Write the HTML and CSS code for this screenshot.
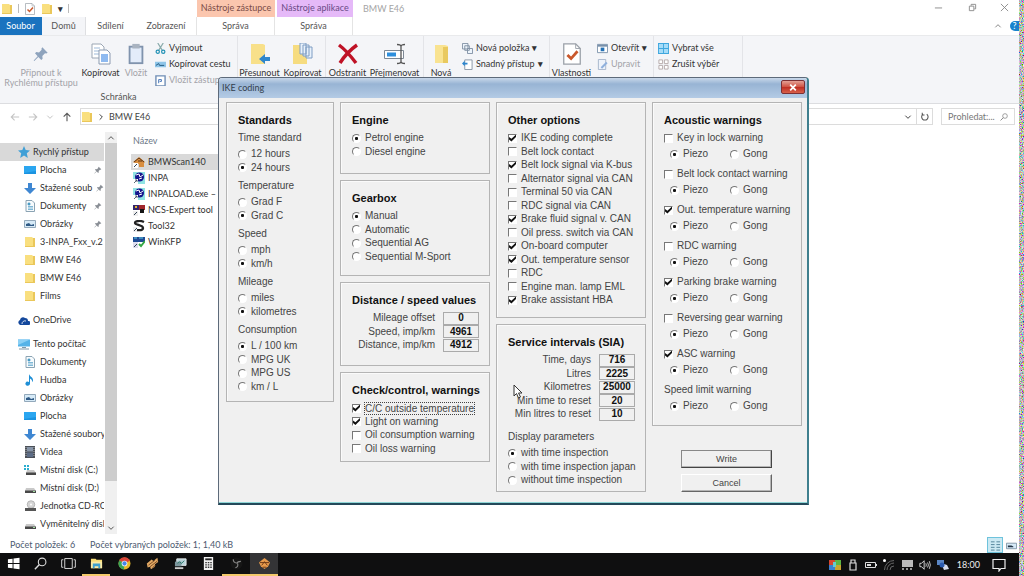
FILE: index.html
```html
<!DOCTYPE html>
<html lang="cs">
<head>
<meta charset="utf-8">
<title>BMW E46</title>
<link rel="stylesheet" href="styles.css">
</head>
<body>

<svg class="sprite" aria-hidden="true">
  <symbol id="folder" viewBox="0 0 12 12"><path d="M1 1h7l1 1h2v9H1z" fill="#f9df7f"/><path d="M9 2h2v9H9zM1 10h10v1H1z" fill="#eac75a"/></symbol>
  <symbol id="star" viewBox="0 0 12 12"><path d="M6 0l1.700 4L12 4.400 8.800 7.300 9.800 12 6 9.500 2.200 12l1-4.700L0 4.400 4.300 4z" fill="#3f9fd6"/></symbol>
  <symbol id="desk" viewBox="0 0 12 12"><path d="M0 2h12v8H0z" fill="#1b93e0"/><path d="M0 2h12v5L0 9z" fill="#2ba6f0"/></symbol>
  <symbol id="down" viewBox="0 0 12 12"><path d="M4 1h4v5h4l-6 6-6-6h4z" fill="#3f87d2"/></symbol>
  <symbol id="doc" viewBox="0 0 12 12"><path d="M2 .5h6l2.500 2.500v8.500H2z" fill="#f7fbfd" stroke="#8ba3b3"/><path d="M4 3h2v2H4zM4 6.500h5M4 8h5M4 9.500h5" stroke="#4b9bc4" fill="#4b9bc4" stroke-width=".7"/></symbol>
  <symbol id="pic" viewBox="0 0 12 12"><path d="M.5 2.500h11v7H.5z" fill="#d6eaf7" stroke="#93a9bb"/><path d="M2 8V6l3-1 2 2 3-1v2z" fill="#2f5a86"/></symbol>
  <symbol id="cloud" viewBox="0 0 12 12"><path d="M1 10a2.500 2.500 0 0 1 1-4 3 3 0 0 1 5-2 3 3 0 0 1 3 3 2 2 0 0 1 1 4H2z" fill="#14489c"/><path d="M4 10a3 3 0 0 1 4-3" stroke="#fff" fill="none" stroke-width=".8"/></symbol>
  <symbol id="pc" viewBox="0 0 12 12"><path d="M0 1.500h12v7H0z" fill="#55b3e8"/><path d="M0 1.500h12L0 7z" fill="#8bd0f5"/><path d="M4 9h4v1H4zM1 10.500h10v1H1z" fill="#7e98a8"/></symbol>
  <symbol id="note" viewBox="0 0 12 12"><path d="M5 0c1 3 4 3 4 6 0 1-.5 2-1 2 .5-2-1-3-2-3.500V9.500A2.300 2 0 1 1 5 8z" fill="#1f8fd6"/></symbol>
  <symbol id="film" viewBox="0 0 12 12"><path d="M1 0h10v12H1z" fill="#4a4f57"/><path d="M3 1h6v4.500H3z" fill="#8795a8"/><path d="M3 6.500h6V11H3z" fill="#5c6c86"/><path d="M2 1v10M10 1v10" stroke="#ccc" stroke-dasharray="1 1" stroke-width=".8"/></symbol>
  <symbol id="disk" viewBox="0 0 12 12"><path d="M2 6h8l2 3H1z" fill="#c9c9c9"/><path d="M1 8.500h11V11H1z" fill="#484848"/><path d="M9 9.500h2" stroke="#9fdc9f"/></symbol>
  <symbol id="diskc" viewBox="0 0 12 12"><path d="M0 1h2v2H0zM3 1h2v2H3zM0 4h2v2H0zM3 4h2v2H3z" fill="#2aaed0"/><path d="M3 6h7l2 3H2z" fill="#c9c9c9"/><path d="M2 8.500h10V11H2z" fill="#484848"/></symbol>
  <symbol id="cd" viewBox="0 0 12 12"><circle cx="7" cy="4.500" r="3.800" fill="#d5d5d5" stroke="#999" stroke-width=".6"/><circle cx="7" cy="4.500" r="1" fill="#fff"/><path d="M1 8h11v3H1z" fill="#555"/></symbol>
  <symbol id="pin" viewBox="0 0 12 12"><path d="M7 1l4 4-1 .7-1-.2-2 2 .2 2-1 1L4 8.200 1 11.300l-.5-.5L3.500 7.700 1.500 5.500l1-1 2 .3 2-2L6.300 2z"/></symbol>
  <symbol id="chev" viewBox="0 0 12 12"><path d="M2 4l4 4 4-4" fill="none" stroke="currentColor" stroke-width="1.500"/></symbol>
  <symbol id="arrow" viewBox="0 0 12 12"><path d="M6 11V1.500M2 5.500l4-4 4 4" fill="none" stroke="currentColor" stroke-width="1.300"/></symbol>
  <symbol id="lens" viewBox="0 0 12 12"><circle cx="7.500" cy="4.500" r="3.500" fill="none" stroke="currentColor"/><path d="M5 7L.8 11.200" stroke="currentColor" stroke-width="1.300"/></symbol>
  <symbol id="check" viewBox="0 0 20 24"><path d="M1 1h13l5 5v17H1z" fill="#fff" stroke="#9aa0a8" stroke-width="1.400"/><path d="M14 1v5h5" fill="none" stroke="#9aa0a8"/><path d="M5 13l4 4 7-8" fill="none" stroke="#c9582c" stroke-width="3"/></symbol>
  <symbol id="sheets" viewBox="0 0 20 22"><path d="M1 1h9l3 3v11H1z" fill="#fff" stroke="#9ba6b4"/><path d="M3 5h6M3 8h8M3 11h8" stroke="#9db9d8"/><path d="M8 7h8l3 3v11H8z" fill="#fff" stroke="#8b9ab0"/><path d="M10 11h7v8h-7z" fill="#8fbaf0"/></symbol>
  <symbol id="inpa" viewBox="0 0 12 12"><path d="M0 0h12v12H0z" fill="#8fe3e3"/><circle cx="6.500" cy="5" r="4.500" fill="#15158c"/><path d="M3 3l3-1 1 3 3-2M6 7l3-1" stroke="#fff" fill="none"/><path d="M0 7h5v5H0z" fill="#fff"/><path d="M1 11l3-3M2 8h2v2" stroke="#345" fill="none" stroke-width=".8"/></symbol>
  <symbol id="chip" viewBox="0 0 16 16"><path d="M1 8l6-5 2 2 5-4 1 5-4 3v3l-5 3-1-3-3 1z" fill="#e0a864"/><path d="M3 10l8-6M5 12l9-7M8 13l4-3" stroke="#6d3d1b"/></symbol>
</svg>

<div class="screen">

  <header class="titlebar">
    <div class="quick">
      <svg class="i12"><use href="#folder"/></svg><i></i>
      <svg class="i12"><use href="#check"/></svg>
      <svg class="i12"><use href="#folder"/></svg>
      <b>&#9662;</b><i></i>
    </div>
    <span class="context context--link">Nástroje zástupce</span>
    <span class="context context--app">Nástroje aplikace</span>
    <h1 class="caption">BMW E46</h1>
    <div class="winbtns">
      <button aria-label="Minimalizovat"><svg viewBox="0 0 10 10"><path d="M1 5.500h8"/></svg></button>
      <button aria-label="Obnovit"><svg viewBox="0 0 10 10"><path d="M1.500 3.500h5v5h-5zM3.500 3V1.500h5v5H7"/></svg></button>
      <button aria-label="Zavřít"><svg viewBox="0 0 10 10"><path d="M1 1l8 8M9 1L1 9"/></svg></button>
    </div>
  </header>

  <nav class="tabs">
    <button class="tab tab--file">Soubor</button>
    <button class="tab tab--on">Domů</button>
    <button class="tab tab--share">Sdílení</button>
    <button class="tab tab--view">Zobrazení</button>
    <button class="tab tab--tool">Správa</button>
    <button class="tab tab--tool">Správa</button>
    <span class="tabs__end">
      <svg class="i8 flip"><use href="#chev"/></svg>
      <button class="help" aria-label="Nápověda">?</button>
    </span>
  </nav>

  <section class="ribbon">
    <div class="group group--clip">
      <div class="group__items">
        <button class="big big--pin off"><svg fill="#8ea3bd"><use href="#pin"/></svg>Připnout k<br>Rychlému přístupu</button>
        <button class="big big--copy"><svg><use href="#sheets"/></svg>Kopírovat</button>
        <button class="big big--slim off"><svg viewBox="0 0 18 24"><path d="M1 3h16v20H1z" fill="#8093ad"/><path d="M3 5h12v16H3z" fill="#e3ecfa"/><path d="M5 1h8v5H5z" fill="#a9b3c0"/></svg>Vložit</button>
        <div class="smalls">
          <button class="small"><svg viewBox="0 0 12 12"><path d="M3 0l5 8M9 0L4 8" stroke="#8aa" stroke-width="1.300"/><circle cx="3" cy="9.500" r="1.800" fill="none" stroke="#2191b5" stroke-width="1.300"/><circle cx="9" cy="9.500" r="1.800" fill="none" stroke="#2191b5" stroke-width="1.300"/></svg>Vyjmout</button>
          <button class="small"><svg viewBox="0 0 12 12"><path d="M0 3h12v6H0z" fill="#8fc5e8"/><path d="M1 7l3-2 1 2h5" stroke="#20587e" fill="none"/></svg>Kopírovat cestu</button>
          <button class="small off"><svg viewBox="0 0 12 12"><path d="M1 1h10v11H1z" fill="#fff" stroke="#6f8db5" stroke-width="1.500"/><path d="M4 9V5h3v2H5" fill="none" stroke="#3d6fb5"/></svg>Vložit zástupce</button>
        </div>
      </div>
      <p class="group__name">Schránka</p>
    </div>
    <div class="group group--move">
      <div class="group__items">
        <button class="big"><svg viewBox="0 0 20 22"><path d="M1 1h12l2 1v19H1z" fill="#f8e08a"/><path d="M9 16l6-5v3h5v4h-5v3z" fill="#2e86cd"/></svg>Přesunout</button>
        <button class="big"><svg viewBox="0 0 20 22"><path d="M0 2h12l2 1v18H0z" fill="#f6dc80"/><path d="M7 0h6v11H7zM10 2h6v11h-6zM13 4h6v11h-6z" fill="#e8f1fb" stroke="#7f9dc3"/></svg>Kopírovat</button>
      </div>
    </div>
    <div class="group group--del">
      <div class="group__items">
        <button class="big"><svg viewBox="0 0 22 22"><path d="M2 2q8 6 17 18M20 2Q10 9 3 20" fill="none" stroke="#bf1226" stroke-width="3.400"/></svg>Odstranit</button>
        <button class="big big--wide"><svg viewBox="0 0 22 20"><path d="M.5 6.500h19v8H.5z" fill="#fff" stroke="#7d8894"/><path d="M3 8.500h9v4H3z" fill="#2e8fdd"/><path d="M13 .5q4 0 4 2 0-2 4-2M17 2v16M13 19.500q4 0 4-2 0 2 4 2" fill="none" stroke="#555"  stroke-width="1.300"/></svg>Přejmenovat</button>
      </div>
    </div>
    <div class="group group--new">
      <div class="group__items">
        <button class="big big--slim"><svg viewBox="0 0 16 22"><path d="M2 2h10l3 1v17H2z" fill="#f9e391"/><path d="M10 4h5v16h-5z" fill="#e9c95f"/></svg>Nová</button>
        <div class="smalls">
          <button class="small"><svg viewBox="0 0 12 12"><path d="M.5.5h6v6h-6zM3 3h5v5H3zM6 6h5.500v5.500H6z" fill="#eef5fc" stroke="#7f8fa3"/></svg>Nová položka <b>&#9662;</b></button>
          <button class="small"><svg viewBox="0 0 12 12"><path d="M3 1h8v10.500H3z" fill="#fff" stroke="#8794a3"/><path d="M0 5l3-3v2h3v2H3v2z" fill="#2e86cd"/></svg>Snadný přístup <b>&#9662;</b></button>
        </div>
      </div>
    </div>
    <div class="group group--open">
      <div class="group__items">
        <button class="big"><svg><use href="#check"/></svg>Vlastnosti</button>
        <div class="smalls">
          <button class="small"><svg viewBox="0 0 12 12"><path d="M.5 1.500h11v9H.5z" fill="#fff" stroke="#7990aa"/><path d="M1 2h10v2H1z" fill="#7990aa"/><path d="M4 5h4v4H4z" fill="#2471b5"/></svg>Otevřít <b>&#9662;</b></button>
          <button class="small off"><svg viewBox="0 0 12 12"><path d="M1.500.5h8v11h-8z" fill="#eef3fb" stroke="#a4b3c9"/><path d="M4 9l6-6 1.500 1.500-6 6z" fill="#8fb0dd"/></svg>Upravit</button>
        </div>
      </div>
    </div>
    <div class="group group--pick">
      <div class="group__items">
        <div class="smalls">
          <button class="small"><svg viewBox="0 0 12 12"><path d="M0 0h12v12H0z" fill="#3fa7de"/><path d="M1 1h4.500v4.500H1zM6.500 1H11v4.500H6.500zM1 6.500h4.500V11H1zM6.500 6.500H11V11H6.500z" fill="#a6dcf8"/></svg>Vybrat vše</button>
          <button class="small"><svg viewBox="0 0 12 12"><path d="M1 1h4v4H1zM7 1h4v4H7zM1 7h4v4H1zM7 7h4v4H7z" fill="#fff" stroke="#b3a9a9"/></svg>Zrušit výběr</button>
        </div>
      </div>
    </div>
  </section>

  <div class="address">
    <svg class="i10 left pale"><use href="#arrow"/></svg>
    <svg class="i10 right pale"><use href="#arrow"/></svg>
    <svg class="i8 pale"><use href="#chev"/></svg>
    <svg class="i10"><use href="#arrow"/></svg>
    <div class="path">
      <svg class="i12"><use href="#folder"/></svg>
      <svg class="i8 left--chev"><use href="#chev"/></svg>
      <span>BMW E46</span>
      <svg class="i8 path__drop"><use href="#chev"/></svg>
      <button class="reload" aria-label="Aktualizovat"><svg viewBox="0 0 12 12"><path d="M9 3a4.300 4.300 0 1 1-5 0M3 1v3h3" fill="none" stroke="#555" stroke-width="1.400"/></svg></button>
    </div>
    <div class="search">
      <input type="text" value="Prohledat:..." aria-label="Prohledat">
      <svg class="i8"><use href="#lens"/></svg>
    </div>
  </div>

  <main class="content">
    <aside class="tree">
      <ul class="tree__list">
        <li class="tree__top tree__top--on"><svg><use href="#star"/></svg><span>Rychlý přístup</span></li>
        <li><svg><use href="#desk"/></svg><span>Plocha</span><svg class="pinned"><use href="#pin"/></svg></li>
        <li><svg><use href="#down"/></svg><span>Stažené soub</span><svg class="pinned"><use href="#pin"/></svg></li>
        <li><svg><use href="#doc"/></svg><span>Dokumenty</span><svg class="pinned"><use href="#pin"/></svg></li>
        <li><svg><use href="#pic"/></svg><span>Obrázky</span><svg class="pinned"><use href="#pin"/></svg></li>
        <li><svg><use href="#folder"/></svg><span>3-INPA_Fxx_v.2</span></li>
        <li><svg><use href="#folder"/></svg><span>BMW E46</span></li>
        <li><svg><use href="#folder"/></svg><span>BMW E46</span></li>
        <li><svg><use href="#folder"/></svg><span>Films</span></li>
        <li class="tree__top"><svg><use href="#cloud"/></svg><span>OneDrive</span></li>
        <li class="tree__top"><svg><use href="#pc"/></svg><span>Tento počítač</span></li>
        <li><svg><use href="#doc"/></svg><span>Dokumenty</span></li>
        <li><svg><use href="#note"/></svg><span>Hudba</span></li>
        <li><svg><use href="#pic"/></svg><span>Obrázky</span></li>
        <li><svg><use href="#desk"/></svg><span>Plocha</span></li>
        <li><svg><use href="#down"/></svg><span>Stažené soubory</span></li>
        <li><svg><use href="#film"/></svg><span>Videa</span></li>
        <li><svg><use href="#diskc"/></svg><span>Místní disk (C:)</span></li>
        <li><svg><use href="#disk"/></svg><span>Místní disk (D:)</span></li>
        <li><svg><use href="#cd"/></svg><span>Jednotka CD-RO</span></li>
        <li><svg><use href="#disk"/></svg><span>Vyměnitelný disk</span></li>
      </ul>
      <div class="scroll">
        <svg class="i8 flip"><use href="#chev"/></svg>
        <div class="scroll__thumb"></div>
        <svg class="i8"><use href="#chev"/></svg>
      </div>
    </aside>
    <section class="files">
      <h2>Název</h2>
      <ul>
        <li class="on"><svg viewBox="0 0 12 12"><path d="M0 6l6-5 6 5-1 1v4H6V8L2 7z" fill="#d98e3f"/><path d="M1 6l5-4 5 4M5 5h4" stroke="#5e3618" fill="none"/><path d="M0 7h5v5H0z" fill="#fff"/><path d="M1 11l3-3" stroke="#345"/></svg>BMWScan140</li>
        <li><svg><use href="#inpa"/></svg>INPA</li>
        <li><svg><use href="#inpa"/></svg>INPALOAD.exe – zástupce</li>
        <li><svg viewBox="0 0 12 12"><path d="M0 1h6v5H0z" fill="#33256b"/><path d="M6 1h6v5H6z" fill="#a1262c"/><path d="M7 5h4v4H7z" fill="#151515"/><path d="M2 2h2v2H2z" fill="#e7b72e"/><path d="M0 7h5v5H0z" fill="#eee"/><path d="M1 11l3-3" stroke="#345"/></svg>NCS-Expert tool</li>
        <li><svg viewBox="0 0 12 12"><path d="M11 2C7 0 2 1 2 3s8 2 8 5-5 2-8 2" fill="none" stroke="#222" stroke-width="2.300"/><path d="M0 7h4v5H0z" fill="#eee"/><path d="M1 11l3-3" stroke="#345"/></svg>Tool32</li>
        <li><svg viewBox="0 0 12 12"><path d="M0 1h12v5H0z" fill="#1f4b94"/><path d="M1 2h3M6 2h4" stroke="#5fd0e8"/><path d="M0 6h5v6H0z" fill="#dde"/><path d="M1 11l3-3" stroke="#345"/><path d="M6 8l2 2 4-5" fill="none" stroke="#35a845" stroke-width="2"/></svg>WinKFP</li>
      </ul>
    </section>
  </main>

  <footer class="status">
    <span>Počet položek: 6</span>
    <span>Počet vybraných položek: 1; 1,40 kB</span>
    <div class="views">
      <button class="on" aria-label="Podrobnosti"><svg viewBox="0 0 12 12"><path d="M1 2h4M7 2h4M1 5h4M7 5h4M1 8h4M7 8h4M1 11h4M7 11h4" stroke="#4d7f96"/></svg></button>
      <button aria-label="Velké ikony"><svg viewBox="0 0 12 12"><path d="M.5 3.500h11v6H.5z" fill="#d6eaf7" stroke="#8196a5"/><path d="M2 8V6h4l2 1v1z" fill="#234"/></svg></button>
    </div>
  </footer>

  <div class="taskbar">
    <button class="start" aria-label="Start"><svg viewBox="0 0 14 14"><path d="M1 2.500l5-.7v4.700H1zM7 1.600L13.500.7v5.800H7zM1 7.500h5v4.700l-5-.7zM7 7.500h6.500v5.800L7 12.400z" fill="#fff"/></svg></button>
    <button aria-label="Hledat"><svg class="light"><use href="#lens"/></svg></button>
    <button aria-label="Zobrazení úkolů"><svg class="wide" viewBox="0 0 16 12"><path d="M4 .7h8v10.600H4zM2.500 2H.7v8h1.800M13.500 2h1.800v8h-1.800" fill="none" stroke="#ddd"/></svg></button>
    <button class="run" aria-label="Průzkumník"><svg viewBox="0 0 14 12"><path d="M1 1h5l1 1h6v9H1z" fill="#f7dc76"/><path d="M1 4h12v7H1z" fill="#fbeaa4"/><path d="M3 11V6h8v5H9V9H5v2z" fill="#3fa0ce"/></svg></button>
    <button aria-label="Chrome"><svg viewBox="0 0 12 12"><circle cx="6" cy="6" r="5.500" fill="#e6b829"/><path d="M6 6L1.200 3.200A5.500 5.500 0 0 1 11 3.500z" fill="#d9443a"/><path d="M6 6L1.200 3.200A5.500 5.500 0 0 0 5.500 11.500z" fill="#3aa356"/><circle cx="6" cy="6" r="2.600" fill="#fff"/><circle cx="6" cy="6" r="2" fill="#4586e8"/></svg></button>
    <button aria-label="Diagnostika"><svg><use href="#chip"/></svg></button>
    <button aria-label="Monitor"><svg viewBox="0 0 14 12"><path d="M3 1h10v7H3z" fill="#b9d2d8" stroke="#e7eef0"/><path d="M1 4h7v5H1z" fill="#7b959c"/><path d="M4 6l2-2 2 2 3-3" stroke="#276" fill="none"/><path d="M1 10h9v2H1z" fill="#ccc"/></svg></button>
    <button aria-label="Kalkulačka"><svg viewBox="0 0 12 14"><path d="M1 0h10v14H1z" fill="#f1f1f1"/><path d="M2.500 2.500h7" stroke="#222" stroke-width="2"/><path d="M2.500 6h7M2.500 8.500h7M2.500 11h7" stroke="#333" stroke-width="1.500" stroke-dasharray="1.700 1"/></svg></button>
    <button class="run" aria-label="OBS"><svg viewBox="0 0 12 12"><circle cx="6" cy="6" r="5.500" fill="#161616"/><path d="M3 2q0 3 3 3.500M10 4q-3 0-4 2M5 10q3-1 2-4" fill="none" stroke="#888"/></svg></button>
    <button class="run run--on" aria-label="BMWScan"><svg viewBox="0 0 14 14"><path d="M1 6l6-5 6 5-2 4-4 3-4-3z" fill="#e69a4c"/><path d="M2 6h10M4 9l3-4 3 4M5 11h4" stroke="#6b3715" fill="none"/></svg></button>
    <div class="tray">
      <svg viewBox="0 0 12 12"><path d="M0 1h6v5H0z" fill="#d8452f"/><path d="M6 1h6v5H6z" fill="#5cb644"/><path d="M0 6h6v5H0z" fill="#3a7fd0"/><path d="M6 6h6v5H6z" fill="#c8a52f"/><path d="M4 3h3v5H4z" fill="#6cc"/></svg>
      <svg viewBox="0 0 12 12"><path d="M4 1h4v3H4zM3 4h6v7H3z" fill="none" stroke="#ddd" stroke-width="1.200"/></svg>
      <svg viewBox="0 0 12 12"><path d="M.5 3.500h10v5H.5zM11.500 5v2" fill="none" stroke="#ddd"/><path d="M2 5h4v2H2z" fill="#ddd"/></svg>
      <svg viewBox="0 0 12 12"><path d="M4 11a7 7 0 0 1 7-7M7 11a4 4 0 0 1 4-4M1.500 11A9.500 9.500 0 0 1 11 1.500" fill="none" stroke="#666"/><circle cx="1.500" cy="1.500" r="1.500" fill="#fff"/></svg>
      <svg viewBox="0 0 12 12"><path d="M1 1h11v7H1z" fill="#bbb"/><path d="M1 10h2M5 10h2M9 10h2" stroke="#999" stroke-width="2"/></svg>
      <svg viewBox="0 0 14 12"><path d="M1 4h2l3-3v10L3 8H1z" fill="none" stroke="#eee"/><path d="M8 4q1 2 0 4M10 3q2 3 0 6M12 1.500q2.500 4.500 0 9" fill="none" stroke="#ddd"/></svg>
      <svg viewBox="0 0 12 12"><path d="M0 1h7v5H0z" fill="#5a86c4"/><path d="M4 4l6 2 2 4-5 1z" fill="#d5dcec"/><circle cx="5" cy="6" r="2.500" fill="#2a5bb0"/></svg>
      <time>18:00</time>
      <svg class="tray__msg" viewBox="0 0 14 14"><path d="M1 1.500h12v9H9L7 13v-2.500H1z" fill="none" stroke="#eee" stroke-width="1.200"/></svg>
    </div>
  </div>

  <form class="dialog" onsubmit="return false">
    <div class="dialog__title">
      <h2>IKE coding</h2>
      <button type="button" aria-label="Close"><svg viewBox="0 0 10 8"><path d="M1.500.5L8.500 7.500M8.500.5L1.500 7.500" stroke="#fff" stroke-width="2.200"/></svg></button>
    </div>
    <div class="dialog__body">

      <div class="col col--first">
        <section class="panel panel--standards">
          <h3>Standards</h3>
          <h4>Time standard</h4>
          <div class="rows">
            <label><input type="radio" name="time">12 hours</label>
            <label><input type="radio" name="time" checked>24 hours</label>
          </div>
          <h4>Temperature</h4>
          <div class="rows">
            <label><input type="radio" name="temp">Grad F</label>
            <label><input type="radio" name="temp" checked>Grad C</label>
          </div>
          <h4>Speed</h4>
          <div class="rows">
            <label><input type="radio" name="speed">mph</label>
            <label><input type="radio" name="speed" checked>km/h</label>
          </div>
          <h4>Mileage</h4>
          <div class="rows">
            <label><input type="radio" name="mileage">miles</label>
            <label><input type="radio" name="mileage" checked>kilometres</label>
          </div>
          <h4>Consumption</h4>
          <div class="rows">
            <label><input type="radio" name="cons" checked>L / 100 km</label>
            <label><input type="radio" name="cons">MPG UK</label>
            <label><input type="radio" name="cons">MPG US</label>
            <label><input type="radio" name="cons">km / L</label>
          </div>
        </section>
      </div>

      <div class="col">
        <section class="panel panel--engine">
          <h3>Engine</h3>
          <div class="rows">
            <label><input type="radio" name="engine" checked>Petrol engine</label>
            <label><input type="radio" name="engine">Diesel engine</label>
          </div>
        </section>
        <section class="panel panel--gearbox">
          <h3>Gearbox</h3>
          <div class="rows">
            <label><input type="radio" name="gear" checked>Manual</label>
            <label><input type="radio" name="gear">Automatic</label>
            <label><input type="radio" name="gear">Sequential AG</label>
            <label><input type="radio" name="gear">Sequential M-Sport</label>
          </div>
        </section>
        <section class="panel panel--distance">
          <h3>Distance / speed values</h3>
          <div class="rows rows--fields">
            <label>Mileage offset<input type="text" value="0"></label>
            <label>Speed, imp/km<input type="text" value="4961"></label>
            <label>Distance, imp/km<input type="text" value="4912"></label>
          </div>
        </section>
        <section class="panel panel--check">
          <h3>Check/control, warnings</h3>
          <div class="rows">
            <label><input type="checkbox" checked><span class="focused">C/C outside temperature</span></label>
            <label><input type="checkbox" checked>Light on warning</label>
            <label><input type="checkbox">Oil consumption warning</label>
            <label><input type="checkbox">Oil loss warning</label>
          </div>
        </section>
      </div>

      <div class="col">
        <section class="panel panel--other">
          <h3>Other options</h3>
          <div class="rows">
            <label><input type="checkbox" checked>IKE coding complete</label>
            <label><input type="checkbox">Belt lock contact</label>
            <label><input type="checkbox" checked>Belt lock signal via K-bus</label>
            <label><input type="checkbox">Alternator signal via CAN</label>
            <label><input type="checkbox">Terminal 50 via CAN</label>
            <label><input type="checkbox">RDC signal via CAN</label>
            <label><input type="checkbox" checked>Brake fluid signal v. CAN</label>
            <label><input type="checkbox">Oil press. switch via CAN</label>
            <label><input type="checkbox" checked>On-board computer</label>
            <label><input type="checkbox" checked>Out. temperature sensor</label>
            <label><input type="checkbox">RDC</label>
            <label><input type="checkbox">Engine man. lamp EML</label>
            <label><input type="checkbox" checked>Brake assistant HBA</label>
          </div>
        </section>
        <section class="panel panel--service">
          <h3>Service intervals (SIA)</h3>
          <div class="rows rows--fields">
            <label>Time, days<input type="text" value="716"></label>
            <label>Litres<input type="text" value="2225"></label>
            <label>Kilometres<input type="text" value="25000"></label>
            <label>Min time to reset<input type="text" value="20"></label>
            <label>Min litres to reset<input type="text" value="10"></label>
          </div>
          <h4>Display parameters</h4>
          <div class="rows">
            <label><input type="radio" name="insp" checked>with time inspection</label>
            <label><input type="radio" name="insp">with time inspection japan</label>
            <label><input type="radio" name="insp">without time inspection</label>
          </div>
        </section>
      </div>

      <div class="col">
        <section class="panel panel--acoustic">
          <h3>Acoustic warnings</h3>
          <div class="warn">
            <label><input type="checkbox">Key in lock warning</label>
            <div class="warn__kind"><label><input type="radio" name="w1" checked>Piezo</label><label><input type="radio" name="w1">Gong</label></div>
          </div>
          <div class="warn">
            <label><input type="checkbox">Belt lock contact warning</label>
            <div class="warn__kind"><label><input type="radio" name="w2" checked>Piezo</label><label><input type="radio" name="w2">Gong</label></div>
          </div>
          <div class="warn">
            <label><input type="checkbox" checked>Out. temperature warning</label>
            <div class="warn__kind"><label><input type="radio" name="w3" checked>Piezo</label><label><input type="radio" name="w3">Gong</label></div>
          </div>
          <div class="warn">
            <label><input type="checkbox">RDC warning</label>
            <div class="warn__kind"><label><input type="radio" name="w4" checked>Piezo</label><label><input type="radio" name="w4">Gong</label></div>
          </div>
          <div class="warn">
            <label><input type="checkbox" checked>Parking brake warning</label>
            <div class="warn__kind"><label><input type="radio" name="w5" checked>Piezo</label><label><input type="radio" name="w5">Gong</label></div>
          </div>
          <div class="warn">
            <label><input type="checkbox">Reversing gear warning</label>
            <div class="warn__kind"><label><input type="radio" name="w6" checked>Piezo</label><label><input type="radio" name="w6">Gong</label></div>
          </div>
          <div class="warn">
            <label><input type="checkbox" checked>ASC warning</label>
            <div class="warn__kind"><label><input type="radio" name="w7" checked>Piezo</label><label><input type="radio" name="w7">Gong</label></div>
          </div>
          <div class="warn">
            <p>Speed limit warning</p>
            <div class="warn__kind"><label><input type="radio" name="w8" checked>Piezo</label><label><input type="radio" name="w8">Gong</label></div>
          </div>
        </section>
        <div class="actions">
          <button class="btn btn--default">Write</button>
          <button class="btn" type="button">Cancel</button>
        </div>
      </div>

    </div>
  </form>

  <svg class="pointer" viewBox="0 0 10 15"><path d="M1 1v11l2.500-2.500L5.500 14l2-1-2-4H9z" fill="#fff" stroke="#333"/></svg>
</div>

<svg class="noise" aria-hidden="true">
  <filter id="grain"><feTurbulence type="fractalNoise" baseFrequency=".9" numOctaves="2"/><feComponentTransfer><feFuncR type="linear" slope="2" intercept="-.5"/><feFuncG type="linear" slope="2" intercept="-.5"/><feFuncB type="linear" slope="2" intercept="-.5"/><feFuncA type="linear" slope="0" intercept="1"/></feComponentTransfer></filter>
  <rect width="100%" height="100%" filter="url(#grain)"/>
</svg>

</body>
</html>
```
FILE: styles.css
```css
* {
	box-sizing: border-box;
}

body {
	margin: 0;
	display: flex;
	height: 100vh;
	overflow: hidden;
	background: #fff;
	color: #333;
	font: 9px/12px Lato, "Open Sans", sans-serif;
}

h1, h2, h3, h4, p, ul {
	margin: 0;
	padding: 0;
	font-size: inherit;
	font-weight: normal;
	list-style: none;
}

button, input {
	margin: 0;
	padding: 0;
	border: none;
	background: none;
	color: inherit;
	font: inherit;
}

svg {
	flex: none;
}

.sprite {
	position: absolute;
	width: 0;
	height: 0;
}

.i12 { width: 12px; height: 12px; }
.i10 { width: 10px; height: 10px; }
.i8 { width: 8px; height: 8px; }
.flip { transform: rotate(180deg); }
.left { transform: rotate(-90deg); }
.right { transform: rotate(90deg); }
.left--chev { transform: rotate(-90deg); }
.pale { color: #c4c4c4; }
.off { color: #a3a3a8; }

.screen {
	position: relative;
	display: flex;
	flex: 1;
	flex-direction: column;
	min-width: 0;
}

.noise {
	width: 5px;
	height: 100%;
}

/* title bar and tabs */

.titlebar {
	display: flex;
	height: 17px;
}

.quick {
	display: flex;
	align-items: center;
	gap: 5px;
	width: 197px;
	padding-left: 1px;
}

.quick i {
	width: 1px;
	height: 9px;
	background: #bbb;
}

.context {
	width: 78px;
	margin-right: 2px;
	line-height: 16px;
	text-align: center;
	white-space: nowrap;
	color: #7a4c48;
}

.context--link { background: #fbc6ae; }
.context--app { width: 76px; background: #e5b9f8; color: #6a4a86; }

.caption {
	padding-left: 8px;
	line-height: 18px;
	color: #a5a5a5;
}

.winbtns {
	display: flex;
	align-items: center;
	margin-left: auto;
}

.winbtns button {
	width: 34px;
	height: 16px;
}

.winbtns button:last-child { width: 30px; }

.winbtns svg {
	width: 9px;
	height: 9px;
	fill: none;
	stroke: #888;
}

.tabs {
	display: flex;
	height: 18px;
}

.tab {
	color: #555;
	border-right: 1px solid transparent;
}

.tab--file { width: 42px; background: #1a73bf; color: #fff; }
.tab--on { width: 44px; background: #f4f5f8; border-right-color: #dedfe2; }
.tab--share { width: 50px; }
.tab--view { width: 61px; border-right-color: #e4e4e4; }
.tab--tool { width: 78px; border-right-color: #e4e4e4; }

.tabs__end {
	display: flex;
	align-items: center;
	gap: 8px;
	margin-left: auto;
	color: #888;
}

.help {
	width: 9px;
	height: 10px;
	border-radius: 5px 0 0 5px;
	background: #1a82cd;
	color: #fff;
	line-height: 10px;
}

/* ribbon */

.ribbon {
	display: flex;
	height: 69px;
	background: #f4f5f8;
	border-bottom: 1px solid #dcdde0;
	border-top: 1px solid #e9eaec;
}

.group {
	display: flex;
	flex-direction: column;
	justify-content: space-between;
	border-right: 1px solid #e3e4e8;
}

.group--clip { width: 238px; }
.group--move { width: 88px; }
.group--del { width: 98px; }
.group--new { width: 126px; }
.group--open { width: 104px; }
.group--pick { width: 89px; }

.group__items {
	display: flex;
	padding-top: 4px;
	white-space: nowrap;
}

.group__name {
	text-align: center;
	color: #555;
}

.big {
	display: flex;
	flex-direction: column;
	align-items: center;
	width: 43px;
	line-height: 10px;
}

.big svg {
	width: 22px;
	height: 22px;
	margin: 3px 0;
}

.big--pin { width: 82px; }
.big--pin svg { width: 16px; height: 16px; margin: 6px; }
.big--copy { width: 37px; }
.big--slim { width: 34px; }
.big--wide { width: 51px; }

.smalls {
	padding-left: 4px;
}

.big--copy ~ .smalls {
	padding-left: 2px;
}

.small {
	display: flex;
	align-items: center;
	gap: 3px;
	height: 16px;
}

.small svg {
	width: 11px;
	height: 11px;
}

/* address bar */

.address {
	display: flex;
	align-items: center;
	gap: 8px;
	height: 25px;
	padding: 0 4px 0 10px;
	color: #555;
}

.path {
	display: flex;
	flex: 1;
	align-items: center;
	gap: 4px;
	height: 17px;
	border: 1px solid #dcdcdc;
	color: #444;
}

.path__drop {
	margin-left: auto;
}

.reload {
	display: flex;
	align-items: center;
	justify-content: center;
	width: 16px;
	height: 15px;
	border-left: 1px solid #dcdcdc;
}

.reload svg {
	width: 9px;
	height: 9px;
}

.search {
	display: flex;
	align-items: center;
	width: 74px;
	height: 17px;
	padding: 0 6px;
	border: 1px solid #dcdcdc;
	color: #777;
}

.search input {
	flex: 1;
	min-width: 0;
}

/* folder tree and files */

.content {
	display: flex;
	flex: 1;
	min-height: 0;
}

.tree {
	display: flex;
	width: 117px;
	padding-bottom: 3px;
}

.tree__list {
	width: 104px;
	padding-top: 14px;
	overflow: hidden;
}

.tree li {
	display: flex;
	align-items: center;
	gap: 4px;
	height: 18px;
	padding-left: 24px;
	white-space: nowrap;
}

.tree li.tree__top {
	gap: 3px;
	margin-top: 6px;
	padding-left: 18px;
}

.tree li.tree__top--on {
	margin-top: 0;
	background: #d9d9d9;
}

.tree li svg {
	width: 12px;
	height: 12px;
}

.tree li svg.pinned {
	width: 8px;
	height: 8px;
	margin: 0 2px 0 auto;
	fill: #8a8f96;
}

.scroll {
	display: flex;
	flex-direction: column;
	align-items: center;
	width: 12px;
	margin: 3px 0 0 1px;
	padding: 2px 0;
	background: #f0f0f0;
	color: #555;
}

.scroll__thumb {
	width: 100%;
	height: 85%;
	margin: 1px 0 auto;
	background: #cdcdcd;
}

.files {
	flex: 1;
	padding: 5px 0 0 14px;
}

.files h2 {
	height: 20px;
	padding-left: 2px;
	line-height: 14px;
	color: #6d7887;
}

.files li {
	display: flex;
	align-items: center;
	gap: 3px;
	max-width: 440px;
	height: 16px;
	padding-left: 2px;
}

.files li.on {
	background: #d9d9d9;
}

.files svg {
	width: 12px;
	height: 12px;
}

.status {
	display: flex;
	align-items: center;
	gap: 15px;
	height: 16px;
	padding-left: 10px;
	color: #4c5a70;
}

.views {
	display: flex;
	margin-left: auto;
}

.views button {
	display: flex;
	align-items: center;
	justify-content: center;
	width: 16px;
	height: 16px;
}

.views button.on {
	border: 1px solid #6ec3dc;
	background: #cbe9f3;
}

.views svg {
	width: 11px;
	height: 11px;
}

/* taskbar */

.taskbar {
	display: flex;
	height: 23px;
	background: #0f0f10;
}

.taskbar button {
	display: flex;
	align-items: center;
	justify-content: center;
	width: 28px;
	border-bottom: 2px solid transparent;
}

.taskbar .start { width: 26px; }

.taskbar button svg {
	width: 13px;
	height: 13px;
}

.taskbar button .wide { width: 15px; }

.taskbar .light { color: #ddd; }

.taskbar .run {
	border-bottom-color: #f3c96b;
}

.taskbar .run--on {
	background-color: #343436;
}

.tray {
	display: flex;
	align-items: center;
	gap: 6px;
	margin-left: auto;
	padding-right: 13px;
	color: #eee;
}

.tray svg {
	width: 12px;
	height: 12px;
}

.tray time {
	padding: 0 6px 0 2px;
}

.tray .tray__msg {
	width: 14px;
	height: 14px;
}

/* coding dialog */

.dialog {
	position: absolute;
	top: 77px;
	left: 218px;
	width: 591px;
	border: 1px solid #5d6a7a;
	border-right: 2px solid #3f7f8e;
	border-bottom: 2px solid #24495a;
	border-radius: 4px 4px 0 0;
	background: #f0f0f0;
	color: #444;
	font: 10px/14px "Liberation Sans", Arial, sans-serif;
}

.dialog__title {
	display: flex;
	justify-content: space-between;
	height: 20px;
	padding: 0 2px 0 3px;
	border-radius: 3px 3px 0 0;
	background: linear-gradient(#c9d8ea, #98b4d4 30%, #b4cbe5);
	color: #333e4d;
	font: 9px/20px Lato, "Open Sans", sans-serif;
}

.dialog__title button {
	display: flex;
	align-items: center;
	justify-content: center;
	width: 24px;
	height: 14px;
	margin-top: 2px;
	border: 1px solid #7c3034;
	border-radius: 2px;
	background: linear-gradient(#e3a095, #cf5040 50%, #bd2d22 50%, #d8604a);
}

.dialog__title svg {
	width: 8px;
	height: 7px;
}

.dialog__body {
	display: flex;
	gap: 6px;
	padding: 4px 5px 10px 7px;
	border-bottom: 1px solid #8fd6d6;
}

.col {
	display: flex;
	flex: 1;
	flex-direction: column;
	gap: 6px;
	min-width: 0;
}

.col--first {
	flex: none;
	width: 108px;
}

.panel {
	padding: 9px 10px 0 11px;
	border: 1px solid #b4b4b4;
	box-shadow: inset 1px 1px #fafafa;
	white-space: nowrap;
}

.panel--standards { height: 300px; }
.panel--engine { height: 72px; }
.panel--gearbox { height: 96px; }
.panel--distance { height: 84px; }
.panel--check { height: 90px; }
.panel--other { height: 216px; }
.panel--service { height: 168px; }
.panel--acoustic { height: 324px; }

.panel h3 {
	margin-bottom: 3px;
	color: #111;
	font-size: 11px;
	font-weight: bold;
	line-height: 16px;
}

.panel h4 {
	margin-bottom: 2px;
}

.rows + h4 {
	margin-top: 5px;
}

.panel label {
	display: flex;
	align-items: center;
	gap: 4px;
	height: 14px;
}

.rows label:nth-child(even) {
	height: 13px;
}

.rows--fields label {
	justify-content: flex-end;
	gap: 8px;
}

.rows--fields + h4 {
	margin-top: 9px;
}

.panel input[type="text"] {
	width: 36px;
	height: 13px;
	border: 1px solid #aaa;
	color: #111;
	font-weight: bold;
	text-align: center;
}

.panel input[type="radio"],
.panel input[type="checkbox"] {
	display: flex;
	align-items: center;
	justify-content: center;
	flex: none;
	width: 9px;
	height: 9px;
	appearance: none;
	border: 1px solid;
	border-color: #777 #fff #fff #777;
	background: #fff;
}

.panel input[type="radio"] {
	border-radius: 50%;
}

.panel input[type="radio"]:checked::before {
	width: 3px;
	height: 3px;
	border-radius: 1px;
	background: #111;
	content: "";
}

.panel input[type="checkbox"]:checked::before {
	width: 7px;
	height: 7px;
	background: #111;
	clip-path: polygon(0 35%, 35% 60%, 100% 0, 100% 35%, 35% 100%, 0 70%);
	content: "";
}

.focused {
	line-height: 11px;
	outline: 1px dotted #444;
}

.warn {
	margin-bottom: 6px;
}

.warn__kind {
	display: flex;
	margin-top: 2px;
	padding-left: 6px;
}

.warn__kind label {
	width: 60px;
}

.actions {
	display: flex;
	flex-direction: column;
	gap: 6px;
	margin: 18px 30px 0 29px;
}

.btn {
	height: 18px;
	border: 1px solid;
	border-color: #fff #666 #666 #fff;
	box-shadow: inset -1px -1px #b5b5b5;
	font-size: 9px;
}

.btn--default {
	border-color: #888 #444 #444 #888;
}

.pointer {
	position: absolute;
	top: 384px;
	left: 513px;
	width: 10px;
	height: 15px;
}
```
